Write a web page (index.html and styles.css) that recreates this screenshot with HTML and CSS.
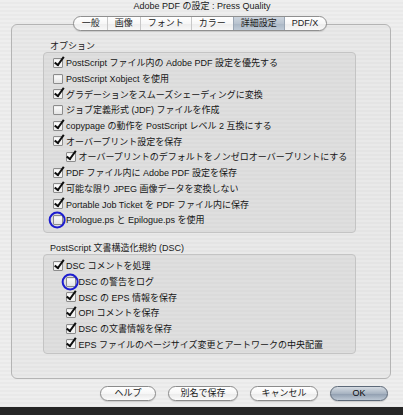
FILE: index.html
```html
<!DOCTYPE html>
<html lang="ja">
<head>
<meta charset="utf-8">
<title>Adobe PDF の設定</title>
<link rel="stylesheet" href="styles.css">
</head>
<body>
<div class="window">
  <div class="title">Adobe PDF の設定 : Press Quality</div>
  <div class="tabs-row">
    <div class="tabs">
      <div class="tab">一般</div>
      <div class="tab">画像</div>
      <div class="tab">フォント</div>
      <div class="tab">カラー</div>
      <div class="tab sel">詳細設定</div>
      <div class="tab">PDF/X</div>
    </div>
  </div>
  <div class="panel">
    <div class="glabel">オプション</div>
    <div class="group g1">
      <div class="row"><span class="cb on"></span><span>PostScript ファイル内の Adobe PDF 設定を優先する</span></div>
      <div class="row"><span class="cb"></span><span>PostScript Xobject を使用</span></div>
      <div class="row"><span class="cb on"></span><span>グラデーションをスムーズシェーディングに変換</span></div>
      <div class="row"><span class="cb"></span><span>ジョブ定義形式 (JDF) ファイルを作成</span></div>
      <div class="row"><span class="cb on"></span><span>copypage の動作を PostScript レベル 2 互換にする</span></div>
      <div class="row"><span class="cb on"></span><span>オーバープリント設定を保存</span></div>
      <div class="row ind"><span class="cb on"></span><span>オーバープリントのデフォルトをノンゼロオーバープリントにする</span></div>
      <div class="row"><span class="cb on"></span><span>PDF ファイル内に Adobe PDF 設定を保存</span></div>
      <div class="row"><span class="cb on"></span><span>可能な限り JPEG 画像データを変換しない</span></div>
      <div class="row"><span class="cb on"></span><span>Portable Job Ticket を PDF ファイル内に保存</span></div>
      <div class="row"><span class="cb"><span class="ring"></span></span><span>Prologue.ps と Epilogue.ps を使用</span></div>
    </div>
    <div class="glabel gsep">PostScript 文書構造化規約 (DSC)</div>
    <div class="group g2">
      <div class="row"><span class="cb on"></span><span>DSC コメントを処理</span></div>
      <div class="row ind"><span class="cb"><span class="ring"></span></span><span>DSC の警告をログ</span></div>
      <div class="row ind"><span class="cb on"></span><span>DSC の EPS 情報を保存</span></div>
      <div class="row ind"><span class="cb on"></span><span>OPI コメントを保存</span></div>
      <div class="row ind"><span class="cb on"></span><span>DSC の文書情報を保存</span></div>
      <div class="row ind"><span class="cb on"></span><span>EPS ファイルのページサイズ変更とアートワークの中央配置</span></div>
    </div>
  </div>
  <div class="buttons">
    <div class="btn w-help">ヘルプ</div>
    <div class="btn w-save">別名で保存</div>
    <div class="btn w-cancel">キャンセル</div>
    <div class="btn ok">OK</div>
  </div>
</div>
</body>
</html>
```

FILE: styles.css
```css
html, body {
  margin: 0;
  padding: 0;
}
body {
  width: 403px;
  height: 415px;
  overflow: hidden;
  font-family: "Liberation Sans", "Noto Sans CJK JP", sans-serif;
  font-size: 9px;
  color: #151515;
  background: #262626;
}
.window {
  height: 407px;
  overflow: hidden;
  background: repeating-linear-gradient(to bottom, #eeeeee 0, #eeeeee 2px, #e9e9e9 2px, #e9e9e9 4px);
}
.title {
  height: 13px;
  line-height: 13px;
  text-align: center;
  padding-left: 1px;
  color: #1a1a1a;
}
.tabs-row {
  display: flex;
  justify-content: center;
  margin-top: 3px;
  padding-right: 3px;
  position: relative;
  z-index: 1;
}
.tabs {
  display: flex;
  height: 13px;
  border: 1px solid #8f8f8f;
  border-radius: 8px;
  overflow: hidden;
  background: linear-gradient(to bottom, #ffffff 0%, #f7f7f7 50%, #ececec 51%, #f8f8f8 100%);
  box-shadow: 0 1px 1px rgba(0,0,0,0.12);
}
.tab {
  padding: 0 7px;
  line-height: 13px;
  border-left: 1px solid #c8c8c8;
  color: #222;
}
.tab:first-child {
  border-left: 0;
  padding-left: 8px;
}
.tab:last-child {
  padding-right: 8px;
}
.tab.sel {
  background: linear-gradient(to bottom, #cdd5de 0%, #b8c3cf 50%, #a9b6c4 51%, #bfcad6 100%);
  border-left-color: #9aa6b4;
}
.tab.sel + .tab {
  border-left-color: #9aa6b4;
}
.panel {
  margin: -7px 12px 0 11px;
  height: 355px;
  box-sizing: border-box;
  border: 1px solid #b4b4b4;
  border-radius: 6px;
  background: rgba(0,0,0,0.018);
  padding: 15px 34px 0 31px;
}
.glabel {
  line-height: 12px;
  padding-left: 7px;
  color: #1a1a1a;
}
.gsep {
  margin-top: 9px;
}
.group {
  border: 1px solid #c4c4c4;
  border-radius: 4px;
  background: rgba(0,0,0,0.04);
  box-sizing: border-box;
}
.g1 {
  height: 181px;
  padding: 2px 0 0 9px;
}
.g2 {
  height: 100px;
  padding: 3px 0 0 9px;
}
.row {
  display: flex;
  align-items: center;
  height: 15.7px;
  white-space: nowrap;
}
.row.ind {
  padding-left: 12.5px;
}
.cb {
  position: relative;
  flex: none;
  width: 8px;
  height: 8px;
  margin-right: 3px;
  border: 1px solid #8c8c8c;
  border-radius: 1px;
  background: linear-gradient(to bottom, #ffffff, #e4e4e4);
  box-shadow: inset 0 1px 1px rgba(0,0,0,0.08);
}
.cb.on {
  background: linear-gradient(to bottom, #ffffff, #eeeeee);
}
.cb.on::after {
  content: "";
  position: absolute;
  left: 2.5px;
  top: -4px;
  width: 3px;
  height: 8.5px;
  border: solid #0e0e0e;
  border-width: 0 2.2px 2.2px 0;
  transform: rotate(36deg);
}
.ring {
  position: absolute;
  left: 50%;
  top: 50%;
  width: 17px;
  height: 17px;
  box-sizing: border-box;
  border: 2px solid #1d1dcf;
  border-radius: 50%;
  transform: translate(-55%, -50%);
}
.buttons {
  display: flex;
  justify-content: flex-end;
  gap: 12px;
  margin-top: 7px;
  padding-right: 15px;
}
.btn {
  height: 15px;
  box-sizing: border-box;
  line-height: 13px;
  text-align: center;
  border: 1px solid #8b8b8b;
  border-radius: 8px;
  background: linear-gradient(to bottom, #ffffff 0%, #f6f6f6 50%, #e9e9e9 51%, #fbfbfb 100%);
  box-shadow: 0 1px 1px rgba(0,0,0,0.15);
  color: #1a1a1a;
}
.w-help { width: 56px; }
.w-save { width: 70px; }
.w-cancel { width: 68px; }
.ok {
  width: 58px;
  border-color: #5d6978;
  background: linear-gradient(to bottom, #d5dbe2 0%, #a8b4c2 50%, #8e9cae 51%, #bcc7d3 100%);
  color: #0a0a0a;
}
```
